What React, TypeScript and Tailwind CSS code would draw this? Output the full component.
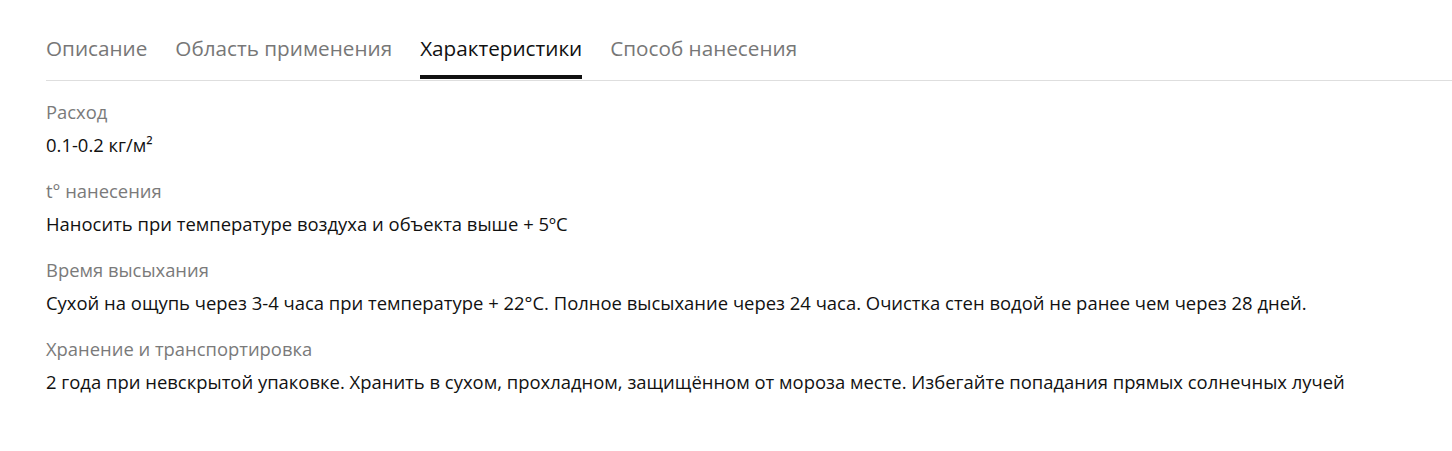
const tabs = ['Описание', 'Область применения', 'Характеристики', 'Способ нанесения'];

const specs = [
  { label: 'Расход', value: <>0.1-0.2 кг/м²</> },
  { label: 't° нанесения', value: 'Наносить при температуре воздуха и объекта выше + 5ºС' },
  {
    label: 'Время высыхания',
    value: 'Сухой на ощупь через 3-4 часа при температуре + 22°С. Полное высыхание через 24 часа. Очистка стен водой не ранее чем через 28 дней.',
  },
  {
    label: 'Хранение и транспортировка',
    value: '2 года при невскрытой упаковке. Хранить в сухом, прохладном, защищённом от мороза месте. Избегайте попадания прямых солнечных лучей',
  },
];

export default function App() {
  return (
    <div className="min-h-screen bg-white pl-[46px] pt-[34px] font-['Open_Sans',sans-serif]">
      <div className="flex gap-[28px] border-b border-[#dedede]">
        {tabs.map((t) => (
          <div
            key={t}
            className={
              t === 'Характеристики'
                ? 'pb-[13px] mb-px border-b-4 border-[#111] text-[20.7px] leading-[28px] text-[#111]'
                : 'pb-[13px] mb-px border-b-4 border-transparent text-[20.7px] leading-[28px] text-[#777]'
            }
          >
            {t}
          </div>
        ))}
      </div>
      <div className="pt-[18px] flex flex-col gap-[20px]">
        {specs.map((s) => (
          <div key={s.label} className="flex flex-col gap-[7px]">
            <div className="text-[18.4px] leading-[26px] text-[#7a7a7a]">{s.label}</div>
            <div className="text-[18.45px] leading-[26px] text-[#111]">{s.value}</div>
          </div>
        ))}
      </div>
    </div>
  );
}
